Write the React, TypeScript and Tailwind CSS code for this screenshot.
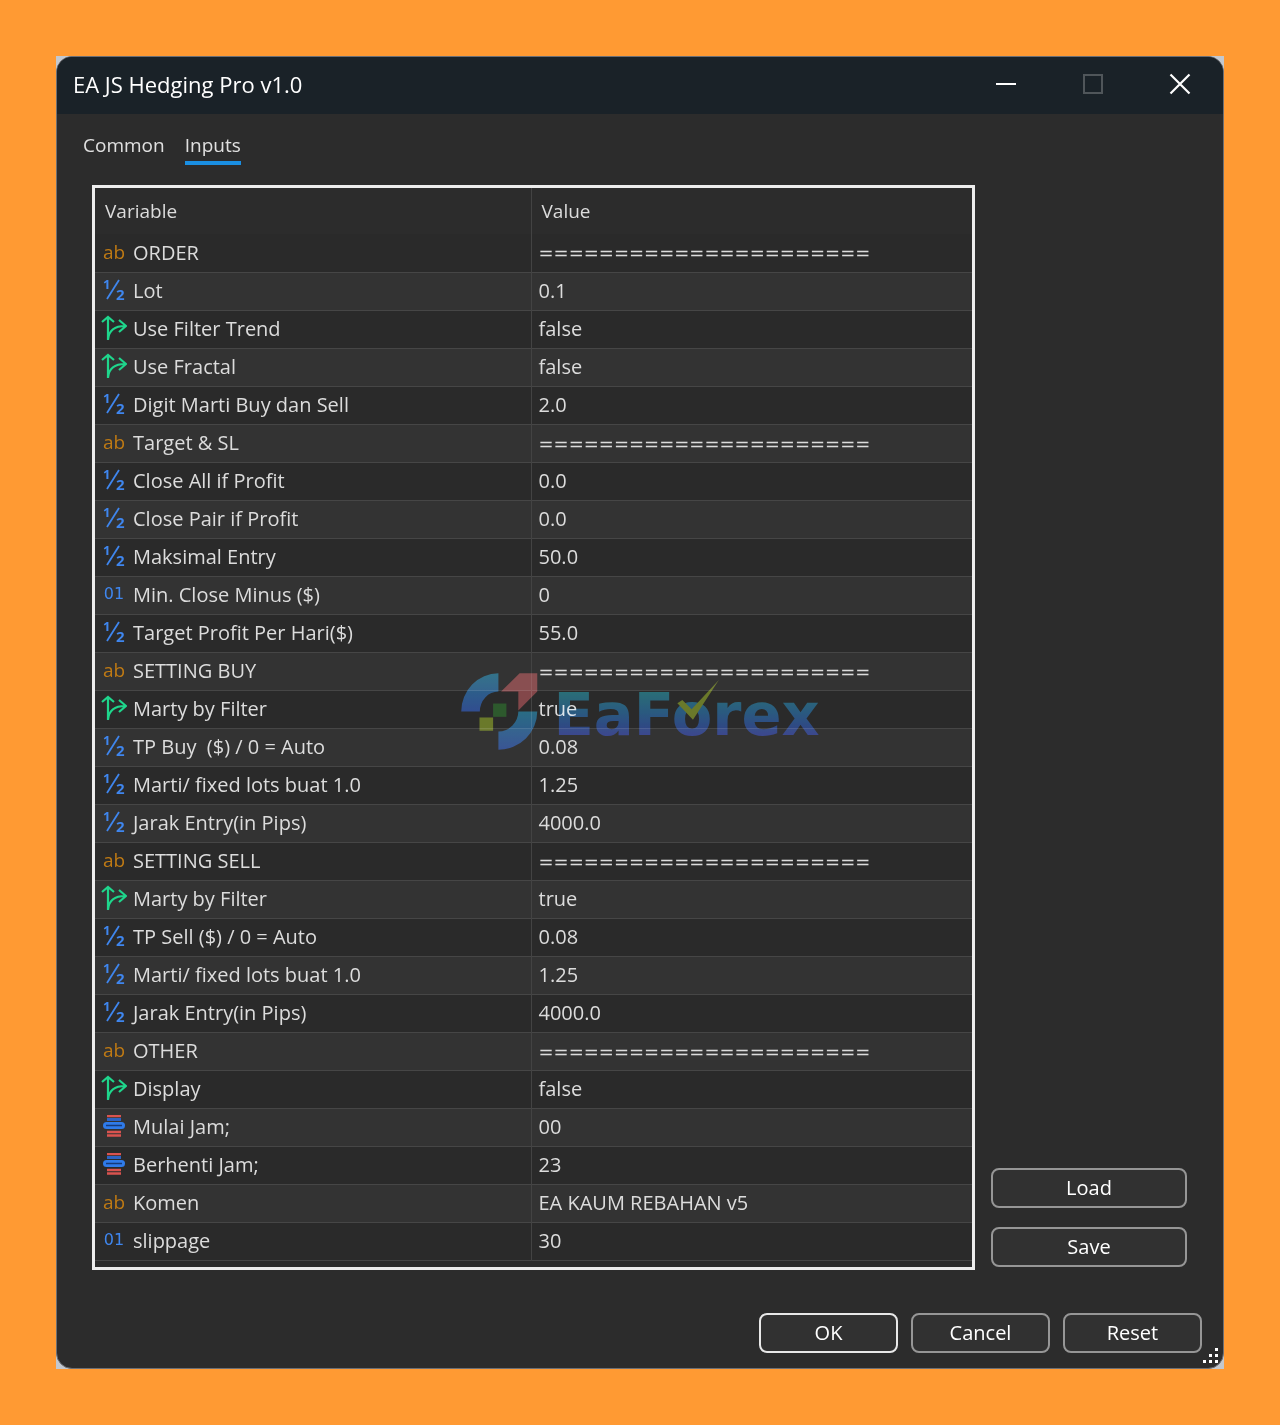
import React, { useState } from 'react';

type VarType = 'string' | 'double' | 'bool' | 'int' | 'enum';

interface InputRow {
  type: VarType;
  name: string;
  value: string;
}

const SEPARATOR = '='.repeat(22);

const ROWS: InputRow[] = [
  { type: 'string', name: 'ORDER', value: SEPARATOR },
  { type: 'double', name: 'Lot', value: '0.1' },
  { type: 'bool', name: 'Use Filter Trend', value: 'false' },
  { type: 'bool', name: 'Use Fractal', value: 'false' },
  { type: 'double', name: 'Digit Marti Buy dan Sell', value: '2.0' },
  { type: 'string', name: 'Target & SL', value: SEPARATOR },
  { type: 'double', name: 'Close All if Profit', value: '0.0' },
  { type: 'double', name: 'Close Pair if Profit', value: '0.0' },
  { type: 'double', name: 'Maksimal Entry', value: '50.0' },
  { type: 'int', name: 'Min. Close Minus ($)', value: '0' },
  { type: 'double', name: 'Target Profit Per Hari($)', value: '55.0' },
  { type: 'string', name: 'SETTING BUY', value: SEPARATOR },
  { type: 'bool', name: 'Marty by Filter', value: 'true' },
  { type: 'double', name: 'TP Buy  ($) / 0 = Auto', value: '0.08' },
  { type: 'double', name: 'Marti/ fixed lots buat 1.0', value: '1.25' },
  { type: 'double', name: 'Jarak Entry(in Pips)', value: '4000.0' },
  { type: 'string', name: 'SETTING SELL', value: SEPARATOR },
  { type: 'bool', name: 'Marty by Filter', value: 'true' },
  { type: 'double', name: 'TP Sell ($) / 0 = Auto', value: '0.08' },
  { type: 'double', name: 'Marti/ fixed lots buat 1.0', value: '1.25' },
  { type: 'double', name: 'Jarak Entry(in Pips)', value: '4000.0' },
  { type: 'string', name: 'OTHER', value: SEPARATOR },
  { type: 'bool', name: 'Display', value: 'false' },
  { type: 'enum', name: 'Mulai Jam;', value: '00' },
  { type: 'enum', name: 'Berhenti Jam;', value: '23' },
  { type: 'string', name: 'Komen', value: 'EA KAUM REBAHAN v5' },
  { type: 'int', name: 'slippage', value: '30' },
];

const TABS = ['Common', 'Inputs'];

const App: React.FC = () => {
  const [tab, setTab] = useState('Inputs');

  return (
    <div className="min-h-screen bg-[#ff9a33] p-14 font-['Open_Sans',sans-serif]">
      <div className="bg-[#c3c8cf]">
        <div className="relative rounded-2xl border border-[#6d6f74] bg-[#2c2c2c] overflow-hidden">
          {/* Title bar */}
          <header className="flex h-[57px] items-center justify-between bg-[#1a2228] pl-4">
            <h1 className="pb-[2px] text-[22px] font-medium text-white">EA JS Hedging Pro v1.0</h1>
            <div className="flex h-full">
              <WindowButton label="Minimize">
                <path d="M1 11H21" stroke="#fff" strokeWidth="2" />
              </WindowButton>
              <WindowButton label="Maximize">
                <rect x="2" y="2" width="18" height="18" stroke="#50565a" strokeWidth="2" />
              </WindowButton>
              <WindowButton label="Close">
                <path d="M1.500 1.500L20.500 20.500M20.500 1.500L1.500 20.500" stroke="#fff" strokeWidth="2.200" />
              </WindowButton>
            </div>
          </header>

          {/* Tabs */}
          <div role="tablist" className="flex h-[71px] gap-5 px-[26px] pt-[15px]">
            {TABS.map((t) => (
              <button
                key={t}
                role="tab"
                aria-selected={t === tab}
                onClick={() => setTab(t)}
                className={`h-9 border-b-4 text-[19px] leading-7 text-[#e0e0e0] ${t === tab ? 'border-[#1a8fe3]' : 'border-transparent'}`}
              >
                {t}
              </button>
            ))}
          </div>

          <div className="flex gap-4 pl-[35px] pr-9">
            <div className="relative flex-1 border-3 border-[#ededed] pb-[6px]">
              <table className="w-full table-fixed border-collapse text-left text-xl text-[#dcdcdc]">
                <colgroup>
                  <col className="w-[436px]" />
                  <col />
                </colgroup>
                <thead>
                  <tr className="h-[46px] text-[19px]">
                    <th className="border-r border-[#434343] pl-[10px] font-normal">Variable</th>
                    <th className="pl-[10px] font-normal">Value</th>
                  </tr>
                </thead>
                <tbody>
                  {ROWS.map((row, i) => (
                    <tr key={i} className="h-[38px] border-b border-[#464646] odd:bg-[#2a2a2a] even:bg-[#333333]">
                      <td className="border-r border-[#434343] py-0 pl-[6px]">
                        <div className="flex items-center gap-[6px] leading-6">
                          <span className="flex h-8 w-[26px] items-center justify-center pb-[2px]">
                            <TypeIcon type={row.type} />
                          </span>
                          <span className="whitespace-pre">{row.name}</span>
                        </div>
                      </td>
                      <td className="py-0 pl-[7px] leading-6">
                        {row.value === SEPARATOR ? (
                          <span className="font-['DejaVu_Sans',sans-serif] text-lg leading-6">{row.value}</span>
                        ) : (
                          row.value
                        )}
                      </td>
                    </tr>
                  ))}
                </tbody>
              </table>
              <Watermark />
            </div>

            <div className="flex w-[196px] flex-col justify-end gap-[19px] pb-[3px]">
              <DialogButton>Load</DialogButton>
              <DialogButton>Save</DialogButton>
            </div>
          </div>

          <footer className="flex justify-end gap-[13px] pt-[43px] pr-[21px] pb-[15px]">
            <div className="flex w-[139px] flex-col">
              <DialogButton primary>OK</DialogButton>
            </div>
            <div className="flex w-[139px] flex-col">
              <DialogButton>Cancel</DialogButton>
            </div>
            <div className="flex w-[139px] flex-col">
              <DialogButton>Reset</DialogButton>
            </div>
          </footer>

          {/* Resize grip */}
          <svg className="absolute bottom-1 right-1 h-4 w-4" viewBox="0 0 16 16" fill="#fff">
            <rect x="12" y="0" width="3" height="3" />
            <rect x="6" y="6" width="3" height="3" />
            <rect x="12" y="6" width="3" height="3" />
            <rect x="0" y="12" width="3" height="3" />
            <rect x="6" y="12" width="3" height="3" />
            <rect x="12" y="12" width="3" height="3" />
          </svg>
        </div>
      </div>
    </div>
  );
};

const WindowButton: React.FC<{ label: string; children: React.ReactNode }> = ({ label, children }) => (
  <button aria-label={label} className="flex h-full w-[87px] items-center justify-center pb-1">
    <svg width="22" height="22" viewBox="0 0 22 22" fill="none">
      {children}
    </svg>
  </button>
);

const DialogButton: React.FC<{ primary?: boolean; children: React.ReactNode }> = ({ primary, children }) => (
  <button
    className={`h-10 rounded-lg border-2 bg-[#313131] text-xl leading-9 font-medium text-white ${primary ? 'border-[#e8e8e8]' : 'border-[#969696]'}`}
  >
    {children}
  </button>
);

const TypeIcon: React.FC<{ type: VarType }> = ({ type }) => {
  switch (type) {
    case 'string':
      return <span className="text-[19px] leading-6 text-[#bf7a14]">ab</span>;
    case 'int':
      return <span className="font-['DejaVu_Sans',sans-serif] text-base leading-6 text-[#3f86ee]">01</span>;
    case 'double':
      return (
        <svg width="26" height="32" viewBox="-2 -4 26 32" fill="#3f86ee" fontFamily="Open Sans" fontWeight="700">
          <text x="0" y="11" fontSize="13">1</text>
          <path d="M4 21L16 2" stroke="#3f86ee" strokeWidth="1.800" />
          <text x="13" y="22" fontSize="15">2</text>
        </svg>
      );
    case 'bool':
      return (
        <svg width="26" height="26" viewBox="0 0 26 26" fill="none" stroke="#1fd68c" strokeWidth="2.200">
          <path d="M7 25V2M1 7L7 2L13 7" />
          <path d="M7 24C8 16 13 11 24 11M18 5L25 11L18 17" />
        </svg>
      );
    case 'enum':
      return (
        <svg width="22" height="22" viewBox="0 0 22 22">
          <path d="M4 1H18M4 17H18M4 20.500H18" stroke="#d9534f" strokeWidth="2.400" />
          <path d="M4 4.500H18" stroke="#2b63c4" strokeWidth="3" />
          <rect x="0" y="7" width="22" height="7" rx="3.500" fill="#2f7bea" />
          <path d="M3 10.500H19" stroke="#153a7a" strokeWidth="1.500" />
        </svg>
      );
  }
};

/* Colours are screened over the grid, so rows and values stay readable. */
const Watermark: React.FC = () => (
  <svg
    className="pointer-events-none absolute left-[365px] top-[482px] h-[83px] w-[363px] mix-blend-screen"
    viewBox="60 60 1090 250"
  >
    <defs>
      <linearGradient id="wm-text" gradientUnits="userSpaceOnUse" x1="0" y1="125" x2="0" y2="255">
        <stop offset="0" stopColor="#00525c" />
        <stop offset="0.5" stopColor="#003866" />
        <stop offset="1" stopColor="#0a1a70" />
      </linearGradient>
      <linearGradient id="wm-left" gradientUnits="userSpaceOnUse" x1="0" y1="70" x2="0" y2="185">
        <stop offset="0" stopColor="#00506c" />
        <stop offset="1" stopColor="#082a7a" />
      </linearGradient>
      <linearGradient id="wm-right" gradientUnits="userSpaceOnUse" x1="0" y1="185" x2="0" y2="300">
        <stop offset="0" stopColor="#00506c" />
        <stop offset="1" stopColor="#082a7a" />
      </linearGradient>
    </defs>
    <path d="M174 70A112 115 0 0 0 62 185H118A56 60 0 0 1 174 125Z" fill="url(#wm-left)" />
    <path d="M291 185A117 115 0 0 1 174 300V245A60 60 0 0 0 234 185Z" fill="url(#wm-right)" />
    <path d="M182 125L238 70H291V125L234 182V125Z" fill="#6b2326" />
    <rect x="158" y="161" width="40" height="40" fill="#043804" />
    <rect x="117" y="203" width="41" height="40" fill="#4d5e00" />
    <text x="340" y="255" fontSize="178" fontWeight="700" fontFamily="DejaVu Sans" fill="url(#wm-text)">
      EaForex
    </text>
    <path d="M713 160L728 150L756 178L838 90L760 210Z" fill="#4d5e00" />
  </svg>
);

export default App;
